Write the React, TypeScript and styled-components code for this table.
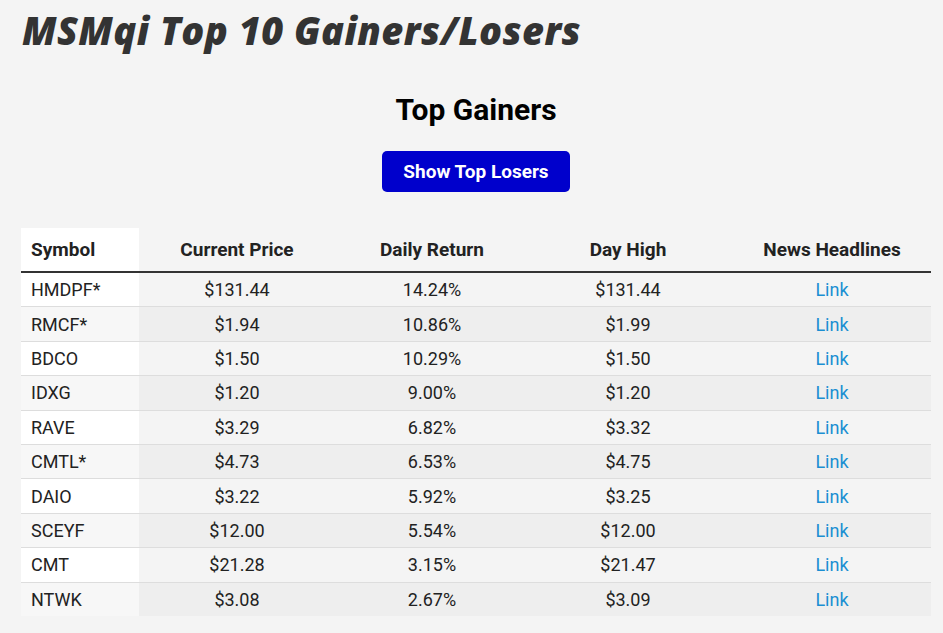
import React from "react";
import styled, { createGlobalStyle } from "styled-components";

const Global = createGlobalStyle`
  html, body { margin: 0; padding: 0; background: #f4f4f4; }
  body { font-family: Roboto, "Liberation Sans", sans-serif; color: #222; }
`;

const Page = styled.div`
  padding: 4px 12px 16px 21px;
`;

const Title = styled.h1`
  margin: 0;
  padding-left: 1px;
  font-family: "Open Sans", sans-serif;
  font-style: italic;
  font-weight: 800;
  font-size: 38px;
  letter-spacing: 0.45px;
  line-height: 52px;
  color: #333;
`;

const Section = styled.section`
  display: flex;
  flex-direction: column;
  align-items: center;
`;

const Heading = styled.h2`
  margin: 36px 0 0;
  font-size: 30px;
  font-weight: 700;
  line-height: 36px;
  color: #000;
`;

const ToggleButton = styled.button`
  margin-top: 23px;
  width: 188px;
  height: 41px;
  border: none;
  border-radius: 5px;
  background: #0000cc;
  color: #fff;
  font-family: Roboto, sans-serif;
  font-weight: 700;
  font-size: 19px;
  cursor: pointer;
`;

const Table = styled.table`
  margin-top: 36px;
  width: 100%;
  table-layout: fixed;
  border-collapse: collapse;
  font-size: 18px;
`;

const Col = styled.col<{ $w: number }>`
  width: ${(p) => p.$w}px;
`;

const HeadCell = styled.th<{ $first?: boolean; $last?: boolean }>`
  height: 44px;
  padding: ${(p) => (p.$last ? "0 5px 0 11px" : "0 10px")};
  font-weight: 700;
  font-size: 19px;
  color: #222;
  text-align: ${(p) => (p.$first ? "left" : "center")};
  background: ${(p) => (p.$first ? "#fff" : "transparent")};
  border-bottom: 2px solid #333;
  box-sizing: border-box;
  white-space: nowrap;
`;

const Row = styled.tr<{ $even: boolean }>`
  background: ${(p) => (p.$even ? "#eee" : "transparent")};
  border-bottom: 1px solid #ddd;
  &:last-child { border-bottom: none; }
`;

const Cell = styled.td<{ $first?: boolean; $even?: boolean; $last?: boolean }>`
  height: 33.4px;
  padding: ${(p) => (p.$last ? "0 5px 0 11px" : "0 10px")};
  color: #222;
  text-align: ${(p) => (p.$first ? "left" : "center")};
  background: ${(p) => (p.$first ? (p.$even ? "#f7f7f7" : "#fff") : "transparent")};
`;

const NewsLink = styled.a`
  color: #1b8fd2;
  text-decoration: none;
`;

const rows = [
  ["HMDPF*", "$131.44", "14.24%", "$131.44"],
  ["RMCF*", "$1.94", "10.86%", "$1.99"],
  ["BDCO", "$1.50", "10.29%", "$1.50"],
  ["IDXG", "$1.20", "9.00%", "$1.20"],
  ["RAVE", "$3.29", "6.82%", "$3.32"],
  ["CMTL*", "$4.73", "6.53%", "$4.75"],
  ["DAIO", "$3.22", "5.92%", "$3.25"],
  ["SCEYF", "$12.00", "5.54%", "$12.00"],
  ["CMT", "$21.28", "3.15%", "$21.47"],
  ["NTWK", "$3.08", "2.67%", "$3.09"],
];

export default function App() {
  return (
    <Page>
      <Global />
      <Title>MSMqi Top 10 Gainers/Losers</Title>
      <Section>
        <Heading>Top Gainers</Heading>
        <ToggleButton>Show Top Losers</ToggleButton>
        <Table>
          <colgroup>
            <Col $w={118} />
            <Col $w={196} />
            <Col $w={194} />
            <Col $w={198} />
            <Col $w={204} />
          </colgroup>
          <thead>
            <tr>
              <HeadCell $first>Symbol</HeadCell>
              <HeadCell>Current Price</HeadCell>
              <HeadCell>Daily Return</HeadCell>
              <HeadCell>Day High</HeadCell>
              <HeadCell $last>News Headlines</HeadCell>
            </tr>
          </thead>
          <tbody>
            {rows.map((r, i) => {
              const even = i % 2 === 1;
              return (
                <Row key={r[0]} $even={even}>
                  <Cell $first $even={even}>{r[0]}</Cell>
                  <Cell>{r[1]}</Cell>
                  <Cell>{r[2]}</Cell>
                  <Cell>{r[3]}</Cell>
                  <Cell $last>
                    <NewsLink href="#">Link</NewsLink>
                  </Cell>
                </Row>
              );
            })}
          </tbody>
        </Table>
      </Section>
    </Page>
  );
}
